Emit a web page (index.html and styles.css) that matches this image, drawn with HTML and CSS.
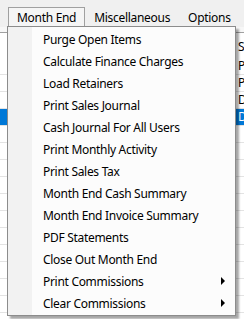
FILE: index.html
```html
<!DOCTYPE html>
<html lang="en">
<head>
  <meta charset="UTF-8" />
  <title>Month End</title>
  <link rel="stylesheet" href="styles.css">
</head>
<body>

  <!-- Menu bar -->
  <div class="menubar">
    <div class="menu-item open">Month End</div>
    <div class="menu-item">Miscellaneous</div>
    <div class="menu-item">Options</div>
  </div>

  <!-- Grid behind the menu -->
  <div class="grid">
    <div class="grid-head">Status</div>
    <div class="grid-row">Print</div>
    <div class="grid-row">Print</div>
    <div class="grid-row">Deposit</div>
    <div class="grid-row selected">Deposit</div>
    <div class="grid-row"></div>
    <div class="grid-row"></div>
    <div class="grid-row"></div>
    <div class="grid-row"></div>
    <div class="grid-row"></div>
    <div class="grid-row"></div>
    <div class="grid-row"></div>
    <div class="grid-row"></div>
    <div class="grid-row"></div>
    <div class="grid-row"></div>
    <div class="grid-row"></div>
  </div>

  <!-- Dropdown -->
  <div class="dropdown">
    <div class="drop-item">Purge Open Items</div>
    <div class="drop-item">Calculate Finance Charges</div>
    <div class="drop-item">Load Retainers</div>
    <div class="drop-item">Print Sales Journal</div>
    <div class="drop-item">Cash Journal For All Users</div>
    <div class="drop-item">Print Monthly Activity</div>
    <div class="drop-item">Print Sales Tax</div>
    <div class="drop-item">Month End Cash Summary</div>
    <div class="drop-item">Month End Invoice Summary</div>
    <div class="drop-item">PDF Statements</div>
    <div class="drop-item">Close Out Month End</div>
    <div class="drop-item sub">Print Commissions<span class="arrow"></span></div>
    <div class="drop-item sub">Clear Commissions<span class="arrow"></span></div>
  </div>

</body>
</html>
```

FILE: styles.css
```css
* {
  box-sizing: border-box;
}

body {
  margin: 0;
  width: 244px;
  height: 319px;
  overflow: hidden;
  position: relative;
  background: #fff;
  font-family: "Noto Sans", "DejaVu Sans", sans-serif;
  font-size: 12px;
  letter-spacing: -0.3px;
  color: #000;
}

.menubar {
  display: flex;
  height: 27px;
  padding: 7px 0 0 8px;
  background: #f0f0f0;
}

.menu-item {
  height: 20px;
  padding: 1px 8px 0 8px;
  line-height: 18px;
  white-space: nowrap;
  border: 1px solid transparent;
  border-bottom: none;
}

.menu-item.open {
  border-color: #a0a0a0;
  background: #f5f5f5;
}

/* grid */
.grid {
  border-top: 5px solid #f7f7f7;
}

.grid-head {
  height: 26px;
  border-top: 1px solid #a0a0a0;
  padding: 5px 0 0 238px;
  white-space: nowrap;
  overflow: hidden;
}

.grid-row {
  height: 17px;
  border-bottom: 1px solid #e3e3e3;
  padding-left: 238px;
  line-height: 16px;
  white-space: nowrap;
  overflow: hidden;
}

.grid-row.selected {
  background: #0078d7;
  color: #fff;
}

/* dropdown */
.dropdown {
  position: absolute;
  top: 26px;
  left: 7px;
  width: 229px;
  padding: 1px 0;
  border: 1px solid #8c8c8c;
  background: linear-gradient(to right, #f2f2f2 24px, #fcfcfc 24px);
  box-shadow: 3px 3px 2px rgba(0, 0, 0, 0.35);
}

.drop-item {
  display: flex;
  justify-content: space-between;
  align-items: center;
  height: 22px;
  padding: 0 10px 0 35px;
  white-space: nowrap;
}

.arrow {
  width: 0;
  height: 0;
  border-left: 4px solid #000;
  border-top: 4px solid transparent;
  border-bottom: 4px solid transparent;
}
```
